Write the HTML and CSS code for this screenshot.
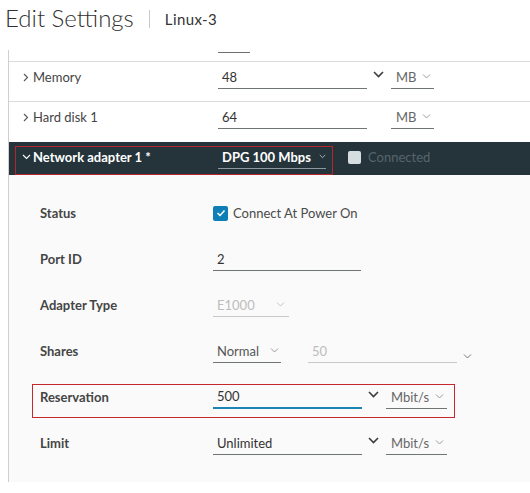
FILE: index.html
```html
<!DOCTYPE html>
<html lang="en">
<head>
    <meta charset="UTF-8">
    <title>Edit Settings</title>
    <link rel="stylesheet" href="styles.css">
</head>
<body>
    <div class="page-title">
        <h1>Edit Settings</h1>
        <span class="divider"></span>
        <span class="vm-name">Linux-3</span>
    </div>

    <div class="panel">
        <!-- row cut off at the top -->
        <div class="hw-row stub">
            <span class="stub-line"></span>
        </div>

        <div class="hw-row">
            <div class="hw-label">
                <svg class="caret" width="6" height="9" viewBox="0 0 6 9"><polyline points="1,1 4.5,4.5 1,8" /></svg>
                Memory
            </div>
            <div class="field">48</div>
            <svg class="dd" width="11" height="7" viewBox="0 0 11 7"><polyline points="1,1 5.5,5.5 10,1" /></svg>
            <div class="field unit">MB <svg class="mini" width="9" height="5" viewBox="0 0 9 5"><polyline points="1,0.5 4.5,4 8,0.5" /></svg></div>
        </div>

        <div class="hw-row last">
            <div class="hw-label">
                <svg class="caret" width="6" height="9" viewBox="0 0 6 9"><polyline points="1,1 4.5,4.5 1,8" /></svg>
                Hard disk 1
            </div>
            <div class="field">64</div>
            <span></span>
            <div class="field unit">MB <svg class="mini" width="9" height="5" viewBox="0 0 9 5"><polyline points="1,0.5 4.5,4 8,0.5" /></svg></div>
        </div>

        <!-- network adapter -->
        <div class="adapter-head">
            <div class="hw-label">
                <svg class="caret-down" width="9" height="6" viewBox="0 0 9 6"><polyline points="1,1 4.5,4.5 8,1" /></svg>
                Network adapter 1 *
            </div>
            <div class="field net">DPG 100 Mbps <svg class="mini" width="9" height="5" viewBox="0 0 9 5"><polyline points="1,0.5 4.5,4 8,0.5" /></svg></div>
            <span></span>
            <div class="connected"><span class="box"></span>Connected</div>
        </div>

        <div class="adapter-body">
            <div class="prop">
                <div class="prop-label">Status</div>
                <div class="check">
                    <span class="check-box">
                        <svg width="10" height="8" viewBox="0 0 10 8"><polyline points="1.5,4 4,6.5 8.5,1.5" /></svg>
                    </span>
                    Connect At Power On
                </div>
            </div>

            <div class="prop">
                <div class="prop-label">Port ID</div>
                <div class="field w148">2</div>
            </div>

            <div class="prop">
                <div class="prop-label">Adapter Type</div>
                <div class="field disabled w76">E1000 <svg class="mini" width="9" height="5" viewBox="0 0 9 5"><polyline points="1,0.5 4.5,4 8,0.5" /></svg></div>
            </div>

            <div class="prop">
                <div class="prop-label">Shares</div>
                <div class="field w68">Normal <svg class="mini" width="9" height="5" viewBox="0 0 9 5"><polyline points="1,0.5 4.5,4 8,0.5" /></svg></div>
                <div class="field disabled w149 ml27">50</div>
                <svg class="mini low" width="9" height="5" viewBox="0 0 9 5"><polyline points="1,0.5 4.5,4 8,0.5" /></svg>
            </div>

            <div class="prop marked">
                <div class="prop-label">Reservation</div>
                <div class="field w149 focus">500</div>
                <svg class="dd" width="11" height="7" viewBox="0 0 11 7"><polyline points="1,1 5.5,5.5 10,1" /></svg>
                <div class="field unit w61">Mbit/s <svg class="mini" width="9" height="5" viewBox="0 0 9 5"><polyline points="1,0.5 4.5,4 8,0.5" /></svg></div>
            </div>

            <div class="prop">
                <div class="prop-label">Limit</div>
                <div class="field w149">Unlimited</div>
                <svg class="dd" width="11" height="7" viewBox="0 0 11 7"><polyline points="1,1 5.5,5.5 10,1" /></svg>
                <div class="field unit w61">Mbit/s <svg class="mini" width="9" height="5" viewBox="0 0 9 5"><polyline points="1,0.5 4.5,4 8,0.5" /></svg></div>
            </div>
        </div>
    </div>
</body>
</html>
```

FILE: styles.css
```css
* {
    margin: 0;
    padding: 0;
    box-sizing: border-box;
}

body {
    font-family: Lato, "Liberation Sans", sans-serif;
    font-size: 13px;
    color: #333;
    background: white;
    width: 530px;
    overflow: hidden;
}

/* title */

.page-title {
    height: 50px;
    display: flex;
    align-items: flex-start;
    padding: 1px 0 0 5px;
}

.page-title h1 {
    font-size: 24px;
    font-weight: 300;
    color: #313131;
    line-height: 34px;
}

.divider {
    width: 1px;
    height: 18px;
    background: #c8c8c8;
    margin: 9px 15px 0 15px;
}

.vm-name {
    font-size: 15px;
    line-height: 36px;
    color: #333;
    letter-spacing: 0.4px;
}

/* panel */

.panel {
    margin-left: 8px;
    border-left: 1px solid #cfcfcf;
    width: 522px;
}

.hw-row {
    display: grid;
    grid-template-columns: 209px 149px 24px 43px;
    height: 40px;
    padding-top: 3px;
    border-bottom: 1px solid #dcdcdc;
}

.hw-row.stub {
    display: block;
    height: 12px;
    padding: 0 0 0 209px;
}

.stub-line {
    display: block;
    width: 32px;
    height: 3px;
    border-bottom: 1px solid #6f6f6f;
}

.hw-row.last {
    border-bottom: none;
}

.hw-label {
    display: flex;
    align-items: center;
    height: 24px;
    padding-left: 14px;
    color: #444;
    white-space: nowrap;
}

.caret {
    fill: none;
    stroke: #555;
    stroke-width: 1.1;
    margin-right: 4px;
}

.field {
    display: flex;
    align-items: center;
    height: 24px;
    padding-left: 4px;
    border-bottom: 1px solid #6f7476;
    color: #333;
    white-space: nowrap;
}

.field .mini {
    margin-left: 6px;
}

.unit {
    color: #666;
    padding-left: 5px;
}

.dd {
    flex: none;
    fill: none;
    stroke: #3b3b3b;
    stroke-width: 1.6;
    margin: 6px 7px 0 6px;
}

.mini {
    fill: none;
    stroke: #9a9a9a;
    stroke-width: 1;
}

/* adapter header */

.adapter-head {
    position: relative;
    display: grid;
    grid-template-columns: 209px 108px 22px auto;
    height: 33px;
    padding-top: 3px;
    background: #25343b;
}

.adapter-head::after {
    content: "";
    position: absolute;
    left: 6px;
    top: 4px;
    width: 316px;
    height: 27px;
    border: 1px solid #b3262d;
}

.adapter-head .hw-label {
    color: white;
    font-weight: 700;
    padding-left: 13px;
}

.caret-down {
    fill: none;
    stroke: white;
    stroke-width: 1.1;
    margin-right: 2px;
}

.field.net {
    color: white;
    font-weight: 700;
    padding-left: 4px;
    border-bottom-color: #8b9aa1;
}

.field.net .mini {
    stroke: #c9d1d5;
    margin-left: 8px;
}

.connected {
    display: flex;
    align-items: center;
    height: 24px;
    color: #56656c;
}

.connected .box {
    width: 13px;
    height: 13px;
    border-radius: 2px;
    background: #d6dde0;
    margin-right: 7px;
}

/* adapter properties */

.adapter-body {
    background: #fafafa;
    padding: 26px 0 27px 31px;
    display: flex;
    flex-direction: column;
    gap: 22px;
}

.prop {
    display: flex;
    height: 24px;
}

.prop.marked {
    position: relative;
}

.prop.marked::after {
    content: "";
    position: absolute;
    left: -8px;
    top: -1px;
    width: 421px;
    height: 32px;
    border: 1px solid #c6262e;
}

.prop-label {
    flex: none;
    width: 173px;
    display: flex;
    align-items: center;
    font-weight: 700;
    color: #454545;
}

.check {
    display: flex;
    align-items: center;
    color: #4a4a4a;
}

.check-box {
    width: 15px;
    height: 15px;
    border-radius: 2px;
    background: #0d7fb6;
    display: flex;
    align-items: center;
    justify-content: center;
    margin-right: 5px;
}

.check-box svg {
    fill: none;
    stroke: white;
    stroke-width: 1.5;
}

.w148 { width: 148px; }
.w149 { width: 149px; }
.w76 { width: 76px; justify-content: space-between; padding-right: 4px; }
.w68 { width: 68px; justify-content: space-between; padding-right: 2px; color: #555; }
.w61 { width: 61px; }
.ml27 { margin-left: 27px; }

.field.disabled {
    color: #bdbdbd;
    border-bottom-color: #c8c8c8;
}

.field.disabled .mini {
    stroke: #c4c4c4;
}

.mini.low {
    margin: 15px 0 0 6px;
    stroke: #777;
}

.field.focus {
    border-bottom: 2px solid #1b85b3;
}
```
